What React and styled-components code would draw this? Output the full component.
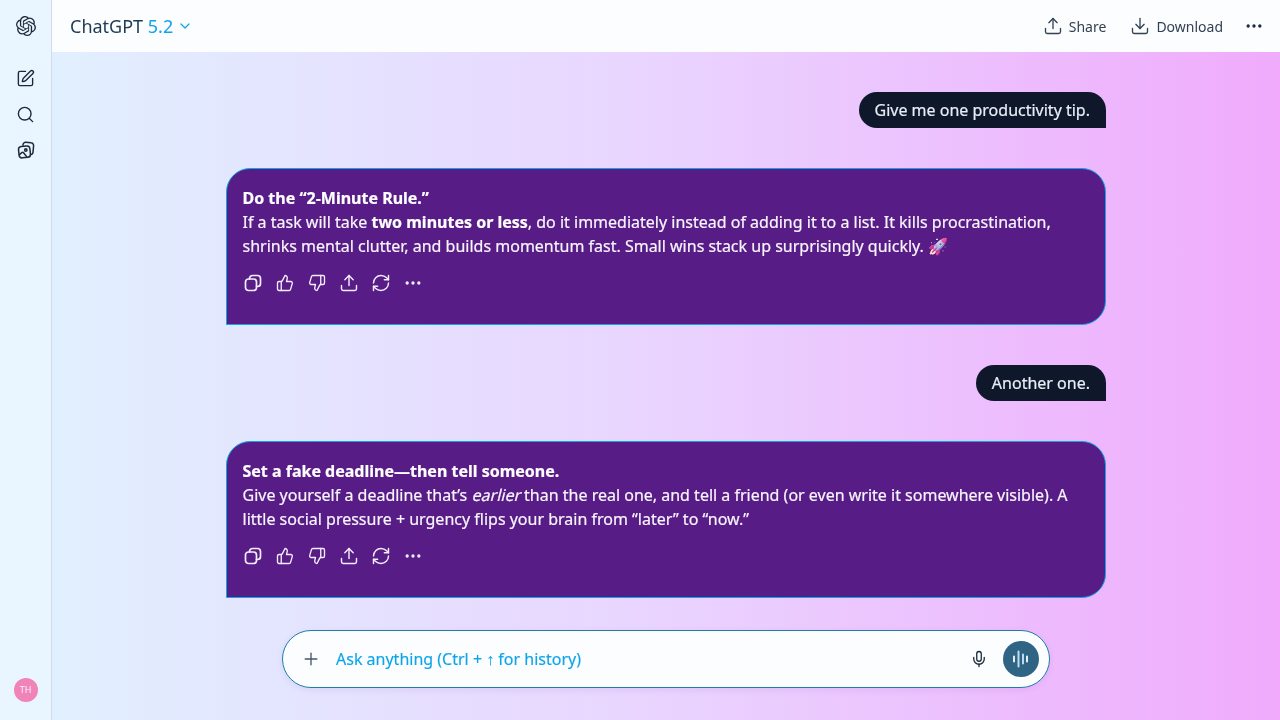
import React from "react";
import styled, { createGlobalStyle } from "styled-components";
import { SiOpenai } from "react-icons/si";
import { SquarePen, Search, Upload, Download, Ellipsis, ChevronDown, ThumbsUp, ThumbsDown, RefreshCw, Plus, Mic } from "lucide-react";

const Global = createGlobalStyle`
  html, body { margin: 0; padding: 0; height: 100%; }
  body { font-family: "Noto Sans", "Liberation Sans", sans-serif; overflow: hidden; }
  * { box-sizing: border-box; }
`;

const Shell = styled.div`
  display: flex;
  width: 1280px;
  height: 720px;
  background: linear-gradient(90deg, #e0f2fe 0%, #e9d5ff 50%, #f0abfc 100%);
`;

const Sidebar = styled.aside`
  flex: 0 0 52px;
  display: flex;
  flex-direction: column;
  align-items: center;
  padding: 16px 0 18px;
  background: #e9f6ff;
  border-right: 1px solid #d3d9ee;
  color: #1e293b;
`;

const Logo = styled.div`
  height: 20px;
  display: flex;
  margin-bottom: 24px;
  color: #1e293b;
`;

const SideIcon = styled.div`
  width: 20px;
  height: 36px;
  display: flex;
  align-items: center;
  justify-content: center;
`;

const Avatar = styled.div`
  margin-top: auto;
  width: 24px;
  height: 24px;
  border-radius: 50%;
  background: #f083b8;
  color: #fdf2f8;
  font-size: 9px;
  line-height: 24px;
  text-align: center;
`;

const Main = styled.main`
  flex: 1;
  min-width: 0;
  display: flex;
  flex-direction: column;
`;

const Header = styled.header`
  flex: 0 0 52px;
  display: flex;
  align-items: center;
  justify-content: space-between;
  padding: 0 16px 0 18px;
  background: #fbfdff;
`;

const Title = styled.div`
  display: flex;
  align-items: center;
  gap: 4px;
  font-size: 18px;
  color: #1e3a52;
`;

const Version = styled.span`
  color: #0ea5e9;
`;

const ChevronWrap = styled.span`
  display: flex;
  color: #0ea5e9;
`;

const Actions = styled.div`
  display: flex;
  align-items: center;
  gap: 24px;
`;

const Action = styled.div`
  display: flex;
  align-items: center;
  gap: 6px;
  font-size: 14px;
  color: #334155;
`;

const MoreAction = styled(Action)`
  margin-left: -3px;
  color: #1e293b;
`;

const Thread = styled.div`
  flex: 1;
  width: 880px;
  margin: 0 auto;
  padding-top: 40px;
  display: flex;
  flex-direction: column;
  gap: 40px;
`;

const UserBubble = styled.div`
  align-self: flex-end;
  height: 36px;
  padding: 0 16px;
  border-radius: 18px 18px 0 18px;
  background: #0f172a;
  color: #e8eef7;
  font-size: 16px;
  line-height: 36px;
  -webkit-text-stroke: 0.2px currentColor;
`;

const AssistantBubble = styled.div`
  height: 157px;
  padding: 17px 16px 0 15.5px;
  border: 1px solid #0ea5e9;
  border-radius: 24px 24px 24px 0;
  background: #581c87;
  color: #f8f5fc;
  font-size: 16px;
  line-height: 24px;
  -webkit-text-stroke: 0.2px currentColor;
`;

const Line = styled.div`
  white-space: nowrap;
`;

const Strong = styled.strong`
  font-weight: 700;
  color: #fff;
`;

const Slanted = styled.span`
  display: inline-block;
  transform: skewX(-14deg);
  transform-origin: left 85%;
`;

const Emoji = styled.span`
  display: inline-block;
  mix-blend-mode: screen;
`;

const Tools = styled.div`
  display: flex;
  align-items: center;
  gap: 12px;
  margin-top: 15px;
  margin-left: 0.5px;
  color: #f3eef9;
`;

const ToolSlot = styled.span`
  width: 20px;
  height: 20px;
  display: flex;
  align-items: center;
  justify-content: center;
`;

const ComposerWrap = styled.div`
  flex: 0 0 90px;
  display: flex;
  justify-content: center;
`;

const Composer = styled.div`
  width: 768px;
  height: 58px;
  display: flex;
  align-items: center;
  padding: 0 10px 0 18px;
  border: 1px solid #1d7ea8;
  border-radius: 29px;
  background: #fcfdff;
  box-shadow: 0 2px 6px rgba(120, 90, 180, 0.12);
  color: #475569;
`;

const Placeholder = styled.div`
  flex: 1;
  margin-left: 15px;
  font-size: 16px;
  color: #0ea5e9;
  -webkit-text-stroke: 0.15px currentColor;
`;

const MicWrap = styled.div`
  display: flex;
  margin-right: 15px;
  color: #1e293b;
`;

const VoiceButton = styled.div`
  width: 36px;
  height: 36px;
  border-radius: 50%;
  background: #2f6484;
  display: flex;
  align-items: center;
  justify-content: center;
`;

const LibraryIcon = () => (
  <svg width="20" height="20" viewBox="0 0 20 20" fill="none" stroke="currentColor" strokeWidth="1.5" strokeLinecap="round" strokeLinejoin="round">
    <path d="M7 5.2V4.8a2.6 2.6 0 0 1 2.8-2.5l5.2.5a2.8 2.8 0 0 1 2.6 3l-.6 6.4a2.6 2.6 0 0 1-2.4 2.3" />
    <rect x="2.8" y="6.2" width="11.4" height="11.4" rx="3" transform="rotate(-6 8.5 12)" />
    <circle cx="9.8" cy="10" r="1.2" />
    <path d="M3.4 14.8 5.8 12.6c.6-.5 1.3-.5 1.8.1l3.4 4.4" />
  </svg>
);

const CopyIcon = () => (
  <svg width="20" height="20" viewBox="0 0 20 20" fill="none" stroke="currentColor" strokeWidth="1.7" strokeLinecap="round" strokeLinejoin="round">
    <rect x="2.5" y="6" width="11" height="11.5" rx="3" />
    <path d="M6.5 6V5.5a3 3 0 0 1 3-3h5a3 3 0 0 1 3 3v5a3 3 0 0 1-3 3h-1" />
  </svg>
);

const VoiceIcon = () => (
  <svg width="20" height="20" viewBox="0 0 20 20" fill="none" strokeWidth="2" strokeLinecap="round">
    <path stroke="#e4f0f8" d="M3 7.5v5M16 7.5v5" />
    <path stroke="#b9dcf2" d="M7.5 2.5v15M12 5.5v9" />
  </svg>
);

const ToolRow = () => (
  <Tools>
    <ToolSlot><CopyIcon /></ToolSlot>
    <ToolSlot><ThumbsUp size={18} strokeWidth={1.8} /></ToolSlot>
    <ToolSlot><ThumbsDown size={18} strokeWidth={1.8} /></ToolSlot>
    <ToolSlot><Upload size={20} strokeWidth={1.75} /></ToolSlot>
    <ToolSlot><RefreshCw size={20} strokeWidth={1.75} /></ToolSlot>
    <ToolSlot><Ellipsis size={20} strokeWidth={2} /></ToolSlot>
  </Tools>
);

export default function App() {
  return (
    <Shell>
      <Global />
      <Sidebar>
        <Logo><SiOpenai size={20} /></Logo>
        <SideIcon><SquarePen size={19} strokeWidth={1.75} /></SideIcon>
        <SideIcon><Search size={19} strokeWidth={1.75} /></SideIcon>
        <SideIcon><LibraryIcon /></SideIcon>
        <Avatar>TH</Avatar>
      </Sidebar>
      <Main>
        <Header>
          <Title>
            <span>ChatGPT <Version>5.2</Version></span>
            <ChevronWrap><ChevronDown size={16} strokeWidth={1.8} /></ChevronWrap>
          </Title>
          <Actions>
            <Action><Upload size={20} strokeWidth={1.6} />Share</Action>
            <Action><Download size={20} strokeWidth={1.6} />Download</Action>
            <MoreAction><Ellipsis size={20} strokeWidth={2} /></MoreAction>
          </Actions>
        </Header>
        <Thread>
          <UserBubble>Give me one productivity tip.</UserBubble>
          <AssistantBubble>
            <Line><Strong>Do the “2-Minute Rule.”</Strong></Line>
            <Line>If a task will take <Strong>two minutes or less</Strong>, do it immediately instead of adding it to a list. It kills procrastination,</Line>
            <Line>shrinks mental clutter, and builds momentum fast. Small wins stack up surprisingly quickly. <Emoji>🚀</Emoji></Line>
            <ToolRow />
          </AssistantBubble>
          <UserBubble>Another one.</UserBubble>
          <AssistantBubble>
            <Line><Strong>Set a fake deadline—then tell someone.</Strong></Line>
            <Line>Give yourself a deadline that’s <Slanted>earlier</Slanted> than the real one, and tell a friend (or even write it somewhere visible). A</Line>
            <Line>little social pressure + urgency flips your brain from “later” to “now.”</Line>
            <ToolRow />
          </AssistantBubble>
        </Thread>
        <ComposerWrap>
          <Composer>
            <Plus size={20} strokeWidth={1.6} />
            <Placeholder>Ask anything (Ctrl + ↑ for history)</Placeholder>
            <MicWrap><Mic size={18} strokeWidth={1.75} /></MicWrap>
            <VoiceButton><VoiceIcon /></VoiceButton>
          </Composer>
        </ComposerWrap>
      </Main>
    </Shell>
  );
}
